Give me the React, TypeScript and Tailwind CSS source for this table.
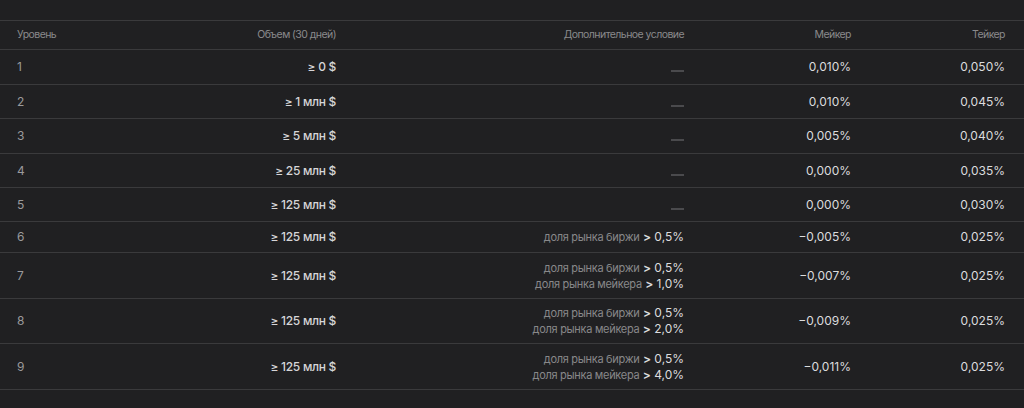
const rows = [
  { level: "1", volume: "≥ 0 $", cond: [], maker: "0,010%", taker: "0,050%", h: "h-[35px]" },
  { level: "2", volume: "≥ 1 млн $", cond: [], maker: "0,010%", taker: "0,045%", h: "h-[34px]" },
  { level: "3", volume: "≥ 5 млн $", cond: [], maker: "0,005%", taker: "0,040%", h: "h-[35px]" },
  { level: "4", volume: "≥ 25 млн $", cond: [], maker: "0,000%", taker: "0,035%", h: "h-[34px]" },
  { level: "5", volume: "≥ 125 млн $", cond: [], maker: "0,000%", taker: "0,030%", h: "h-[34px]" },
  {
    level: "6",
    volume: "≥ 125 млн $",
    cond: [["доля рынка биржи", "0,5%"]],
    maker: "−0,005%",
    taker: "0,025%",
    h: "h-[31px]",
  },
  {
    level: "7",
    volume: "≥ 125 млн $",
    cond: [
      ["доля рынка биржи", "0,5%"],
      ["доля рынка мейкера", "1,0%"],
    ],
    maker: "−0,007%",
    taker: "0,025%",
    h: "h-[46px]",
  },
  {
    level: "8",
    volume: "≥ 125 млн $",
    cond: [
      ["доля рынка биржи", "0,5%"],
      ["доля рынка мейкера", "2,0%"],
    ],
    maker: "−0,009%",
    taker: "0,025%",
    h: "h-[45px]",
  },
  {
    level: "9",
    volume: "≥ 125 млн $",
    cond: [
      ["доля рынка биржи", "0,5%"],
      ["доля рынка мейкера", "4,0%"],
    ],
    maker: "−0,011%",
    taker: "0,025%",
    h: "h-[46px]",
  },
];

const grid =
  "grid grid-cols-[120px_199px_348px_167px_154px] items-center pl-[17px] pr-[19px] border-b border-[#3a3a3c]";

export default function App() {
  return (
    <div className="w-[1024px] h-[408px] bg-[#202022] font-['Inter',sans-serif] overflow-hidden">
      <div className="h-[21px] border-b border-[#3a3a3c]" />
      <div className={`${grid} h-[29px] text-[10.5px] text-[#8a8a8c] tracking-[-0.55px]`}>
        <div>Уровень</div>
        <div className="text-right">Объем (30 дней)</div>
        <div className="text-right">Дополнительное условие</div>
        <div className="text-right">Мейкер</div>
        <div className="text-right">Тейкер</div>
      </div>
      {rows.map((r) => (
        <div key={r.level} className={`${grid} ${r.h} text-[12px]`}>
          <div className="text-[#9a9a9c]">{r.level}</div>
          <div className="text-right text-[#d6d6d8] font-medium tracking-[-0.3px]">{r.volume}</div>
          <div className="flex flex-col items-end">
            {r.cond.length === 0 ? (
              <div className="w-[13px] h-[2px] mt-[8px] bg-[#4a4a4d]" />
            ) : (
              r.cond.map(([label, val]) => (
                <div key={label} className="leading-[16px]">
                  <span className="text-[#88888a] text-[11px] tracking-[-0.3px]">{label}</span>{" "}
                  <span className="text-[#dcdcde] font-semibold">&gt;</span>{" "}
                  <span className="text-[#dcdcde]">{val}</span>
                </div>
              ))
            )}
          </div>
          <div className="text-right text-[#dcdcde]">{r.maker}</div>
          <div className="text-right text-[#dcdcde]">{r.taker}</div>
        </div>
      ))}
    </div>
  );
}
